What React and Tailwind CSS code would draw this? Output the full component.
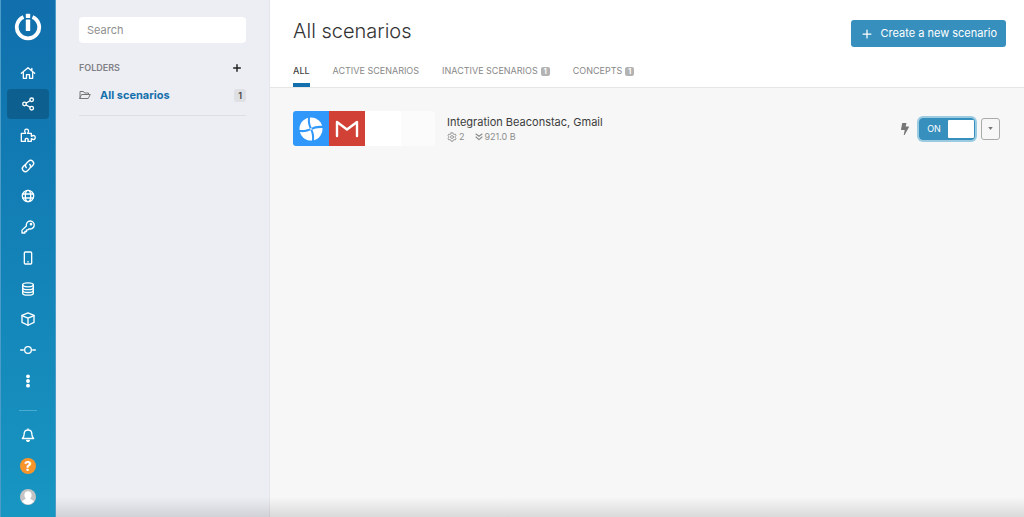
import React, { useState } from 'react'

const Icon = ({ children, className = 'size-4', width = 2 }) => (
  <svg
    viewBox="0 0 24 24"
    className={className}
    fill="none"
    stroke="currentColor"
    strokeWidth={width}
    strokeLinecap="round"
    strokeLinejoin="round"
    aria-hidden="true"
  >
    {children}
  </svg>
)

const navItems = [
  {
    label: 'Organization',
    icon: (
      <>
        <path d="M2 12.500 12 4l10 8.500M17.800 5v4" />
        <path d="M5 11v9h4.700v-5.500h4.600V20H19v-9" />
      </>
    ),
  },
  {
    label: 'Scenarios',
    icon: (
      <>
        <circle cx="6.800" cy="12" r="2.700" />
        <circle cx="17.500" cy="5.700" r="2.700" />
        <circle cx="17.500" cy="18.300" r="2.700" />
        <path d="m9.400 10.500 5.600-3.400M9.400 13.500l5.600 3.400" />
      </>
    ),
  },
  {
    label: 'Templates',
    icon: (
      <path d="M2 9.500h6.500C7 7.500 6.500 6 7.300 4.500c1-1.700 4.200-1.700 5.200 0 .8 1.500.3 3-1 5H17V14c2-1.400 3.500-1.700 4.800-.7 1.400 1.200 1.400 3.700 0 4.900-1.300 1-2.800.7-4.800-.7V21.500h-5.300c1-2.200.8-4.500-1.700-4.500s-2.700 2.300-1.700 4.500H2z" />
    ),
  },
  {
    label: 'Connections',
    icon: (
      <>
        <path d="M9.500 14.500a4.500 4.500 0 0 1 0-6.300l3.300-3.300a4.450 4.450 0 0 1 6.300 6.300l-2.300 2.300" />
        <path d="M14.500 9.500a4.500 4.500 0 0 1 0 6.300l-3.300 3.300a4.450 4.450 0 0 1-6.300-6.300l2.300-2.300" />
      </>
    ),
  },
  {
    label: 'Webhooks',
    icon: (
      <>
        <circle cx="12" cy="12" r="8.500" />
        <ellipse cx="12" cy="12" rx="4" ry="8.500" />
        <path d="M4 9h16M4 15h16" />
      </>
    ),
  },
  {
    label: 'Keys',
    icon: (
      <>
        <path d="M15.300 3a6 6 0 1 1-1.800 11.700L12 16.300H9.800v2.400H7.400V21H3v-4.300l6.600-6.200A6 6 0 0 1 15.300 3z" />
        <circle cx="16.500" cy="7.800" r="1" fill="currentColor" />
      </>
    ),
  },
  {
    label: 'Devices',
    icon: (
      <>
        <rect x="6.500" y="3" width="11" height="18" rx="1.500" />
        <path d="M11.500 17.800h1" />
      </>
    ),
  },
  {
    label: 'Data stores',
    icon: (
      <>
        <ellipse cx="12" cy="5.800" rx="8" ry="3" />
        <path d="M4 5.800v12.500c0 1.600 3.600 3 8 3s8-1.400 8-3V5.800" />
        <path d="M4 10c0 1.600 3.600 3 8 3s8-1.400 8-3M4 14.200c0 1.600 3.600 3 8 3s8-1.400 8-3" />
      </>
    ),
  },
  {
    label: 'Data structures',
    icon: (
      <>
        <path d="m12 2.800 9 3.600v10.800l-9 4.200-9-4.200V6.400z" />
        <path d="m3 6.800 9 3.800 9-3.800M12 10.600v10.600" />
      </>
    ),
  },
  {
    label: 'Apps',
    icon: (
      <>
        <circle cx="12" cy="12" r="5" />
        <path d="M1 12h4M19 12h4" />
      </>
    ),
  },
  {
    label: 'More',
    icon: (
      <g fill="currentColor">
        <circle cx="12" cy="5" r="1.900" />
        <circle cx="12" cy="12" r="1.900" />
        <circle cx="12" cy="19" r="1.900" />
      </g>
    ),
  },
]

const tabs = [
  { label: 'All' },
  { label: 'Active scenarios' },
  { label: 'Inactive scenarios', count: 1 },
  { label: 'Concepts', count: 1 },
]

const Logo = () => (
  <svg viewBox="0 0 28 28" className="size-7" fill="none" aria-hidden="true">
    <path d="M9.500 3.900a11.200 11.200 0 1 0 9 0" stroke="#fff" strokeWidth="3.800" />
    <rect x="11.800" y="0.800" width="4.400" height="4.200" rx="0.600" fill="#fff" />
    <rect x="11.800" y="6.600" width="4.400" height="11.400" rx="0.600" fill="#fff" />
  </svg>
)

const Sidebar = () => (
  <aside className="flex w-14 shrink-0 flex-col items-center border-x border-[#4c9cc8] bg-linear-to-b from-[#106fac] to-[#1896c2] pb-[5px] text-white">
    <a href="#" aria-label="Home" className="flex h-[58px] shrink-0 items-center pb-1">
      <Logo />
    </a>
    <nav className="flex flex-1 flex-col">
      {navItems.map((item) => (
        <a
          key={item.label}
          href="#"
          aria-label={item.label}
          className={
            item.label === 'Scenarios'
              ? 'flex min-h-7 w-[42px] flex-1 items-center justify-center rounded bg-[#0c5f8f]'
              : 'flex min-h-7 w-[42px] flex-1 items-center justify-center rounded'
          }
        >
          <Icon>{item.icon}</Icon>
        </a>
      ))}
    </nav>
    <hr className="mt-3.5 mb-2 w-[18px] border-[#4aabd0]" />
    <button aria-label="Notifications" className="flex h-[31px] items-center">
      <Icon>
        <path d="M12 4.500c-4 0-5.800 3-5.800 6.200 0 3.300-1.200 4.800-2.700 6.500h17c-1.500-1.700-2.700-3.200-2.700-6.500 0-3.200-1.800-6.200-5.800-6.200zM12 2.800v1.500" />
        <path d="M10 20.200a2.200 2.200 0 0 0 4 0z" fill="currentColor" />
      </Icon>
    </button>
    <button aria-label="Help" className="flex h-[31px] items-center">
      <span className="flex size-4 items-center justify-center rounded-full bg-[#f7952b] text-[13px] leading-4 font-extrabold">
        ?
      </span>
    </button>
    <button aria-label="Profile" className="flex h-[31px] items-center">
      <svg viewBox="0 0 16 16" className="size-4" aria-hidden="true">
        <circle cx="8" cy="8" r="8" fill="#c4c4c4" />
        <path
          d="M8 2.200c2.300 0 3.600 1.600 3.600 3.700 0 1.500-.6 2.800-1.400 3.500.5 1 3 1.200 3.800 3.100A8 8 0 0 1 8 15.400a8 8 0 0 1-6-2.900c.8-1.900 3.300-2.100 3.800-3.100-.8-.7-1.400-2-1.400-3.500 0-2.100 1.300-3.700 3.600-3.700z"
          fill="#fff"
        />
      </svg>
    </button>
  </aside>
)

const Folders = () => (
  <section className="w-[214px] shrink-0 border-r border-[#e4e5ea] bg-[#edeef3] px-[23px] pt-[17px]">
    <input
      type="search"
      aria-label="Search"
      placeholder="Search"
      className="block h-[26px] w-full rounded bg-white px-2 text-[11px] text-[#555] placeholder-[#8f8f8f] outline-none"
    />
    <div className="mt-[17px] flex h-4 items-center justify-between pr-1">
      <h2 className="text-[9px] font-semibold text-[#808085] uppercase">Folders</h2>
      <button aria-label="Add folder" className="text-[#222]">
        <Icon className="size-2.5" width={3.5}>
          <path d="M12 4v16M4 12h16" />
        </Icon>
      </button>
    </div>
    <a href="#" className="mt-[11px] flex h-4 items-center text-[#777]">
      <Icon className="size-3">
        <path d="M2 19V5h7l2 3h8v3M2 19h16.500l4-8H6z" />
      </Icon>
      <span className="ml-[9px] flex-1 text-[11px] font-bold text-[#1470ac]">All scenarios</span>
      <span className="rounded-[3px] bg-[#dfe0e4] px-1 text-[9px] leading-[13px] font-semibold text-[#444]">1</span>
    </a>
    <hr className="mt-3 border-[#dedfe3]" />
  </section>
)

const AppIcons = () => (
  <div className="flex h-[35px] shrink-0 overflow-hidden rounded-[3px]">
    <div className="flex w-9 items-center justify-center bg-[#3098fb]">
      <svg viewBox="0 0 24 24" className="size-6" aria-hidden="true">
        <circle cx="12" cy="12" r="11.500" fill="#fff" />
        <g fill="#3098fb">
          <path d="M12 13C9 9.500 8.500 5 9 0h2c-.4 4.500.2 8.500 2 11.400z" />
          <path d="M11 12C14.500 9 19 8.500 24 9v2c-4.500-.4-8.500.2-11.400 2z" />
          <path d="M12 11c3 3.500 3.500 8 3 13h-2c.4-4.500-.2-8.500-2-11.400z" />
          <path d="M13 12C9.500 15 5 15.500 0 15v-2c4.500.4 8.500-.2 11.400-2z" />
        </g>
        <path d="m11 11 2 2M13 11l-2 2" stroke="#fff" strokeWidth="0.600" />
      </svg>
    </div>
    <div className="flex w-9 items-center justify-center bg-[#d14136]">
      <svg viewBox="0 0 24 18" className="h-[18px] w-6" aria-hidden="true">
        <path
          d="M2 16V2l10 7.500L22 2v14"
          fill="none"
          stroke="#fff"
          strokeWidth="2.400"
          strokeLinecap="round"
          strokeLinejoin="round"
        />
      </svg>
    </div>
    <div className="w-9 bg-white" />
    <div className="w-[34px] bg-[#fbfbfb]" />
  </div>
)

const ScenarioRow = () => {
  const [active, setActive] = useState(true)

  return (
    <article className="flex items-center">
      <AppIcons />
      <div className="ml-3 min-w-0 flex-1">
        <h3 className="text-[11px] leading-4 text-[#3c3c3c]">Integration Beaconstac, Gmail</h3>
        <div className="flex items-center text-[9px] leading-[14px] text-[#8d8d8d]">
          <Icon className="mr-0.5 size-2.5">
            <path d="m9.800 1.800 4.400 0 .6 3 2 1.100 2.900-1 2.200 3.800-2.300 2v2.600l2.300 2-2.200 3.800-2.900-1-2 1.100-.6 3H9.800l-.6-3-2-1.100-2.900 1-2.200-3.800 2.300-2v-2.600l-2.300-2 2.200-3.800 2.900 1 2-1.100z" />
            <circle cx="12" cy="12" r="3.500" />
          </Icon>
          <span>2</span>
          <Icon className="mr-0.5 ml-2.5 size-2" width={3.5}>
            <path d="m3 3 9 7 9-7M3 12l9 8 9-8" />
          </Icon>
          <span>921.0 B</span>
        </div>
      </div>
      <svg viewBox="0 0 8 12" className="mr-2.5 h-3 w-2 text-[#777]" aria-hidden="true">
        <path d="M1.200 0h4.300L4.700 3.600h2.800c.4 0 .6.4.4.7L3.600 12h-.9l1-5H.6C.2 7 0 6.700 0 6.400z" fill="currentColor" />
      </svg>
      <button
        role="switch"
        aria-checked={active}
        onClick={() => setActive(!active)}
        className="flex h-[22px] w-14 items-center justify-between rounded-sm border border-[#368fbd] bg-[#368fbd] py-px text-[9px] text-white ring-2 ring-[#9bcbe1]"
      >
        <span className="flex-1 text-center">{active ? 'ON' : 'OFF'}</span>
        <span className="h-full w-[26px] rounded-[1px] bg-white" />
      </button>
      <button
        aria-label="Scenario options"
        className="ml-1.5 flex h-[22px] w-[19px] items-center justify-center rounded-[3px] border border-[#aaa]"
      >
        <svg viewBox="0 0 6 4" className="h-[3px] w-[5px]" aria-hidden="true">
          <path d="M0 0h6L3 4z" fill="#777" />
        </svg>
      </button>
    </article>
  )
}

const App = () => {
  const [tab, setTab] = useState('All')

  return (
    <div className="relative flex min-h-screen bg-[#f7f7f7] font-[Inter,'Liberation_Sans',sans-serif]">
      <Sidebar />
      <Folders />
      <main className="min-w-0 flex-1">
        <header className="border-b border-[#e6e6e6] bg-white pr-[18px] pl-[23px]">
          <div className="flex h-[61px] items-center justify-between">
            <h1 className="text-[20px] font-light text-[#333]">All scenarios</h1>
            <button className="mt-1.5 flex h-[27px] items-center rounded-[3px] bg-[#368fbd] pr-[9px] pl-[11px] text-[11px] text-white">
              <Icon className="mr-2 size-2.5" width={3}>
                <path d="M12 2.500v19M2.500 12h19" />
              </Icon>
              Create a new scenario
            </button>
          </div>
          <div className="flex gap-[23px]">
            {tabs.map((t) => (
              <button
                key={t.label}
                onClick={() => setTab(t.label)}
                className={
                  t.label === tab
                    ? 'flex h-[26px] items-start border-b-4 border-[#1470ac] pt-1 text-[9px] leading-3 font-medium text-[#444] uppercase'
                    : 'flex h-[26px] items-start border-b-4 border-transparent pt-1 text-[9px] leading-3 text-[#888] uppercase'
                }
              >
                {t.label}
                {t.count && (
                  <span className="mt-0.5 ml-[3px] rounded-[2px] bg-[#b3b3b3] px-[3px] text-[7px] leading-[9px] font-bold text-white">
                    {t.count}
                  </span>
                )}
              </button>
            ))}
          </div>
        </header>
        <div className="py-[23px] pr-6 pl-[23px]">
          <ScenarioRow />
        </div>
      </main>
      <div className="pointer-events-none absolute right-0 bottom-0 left-14 h-5 bg-linear-to-t from-black/12 to-transparent" />
    </div>
  )
}

export default App
